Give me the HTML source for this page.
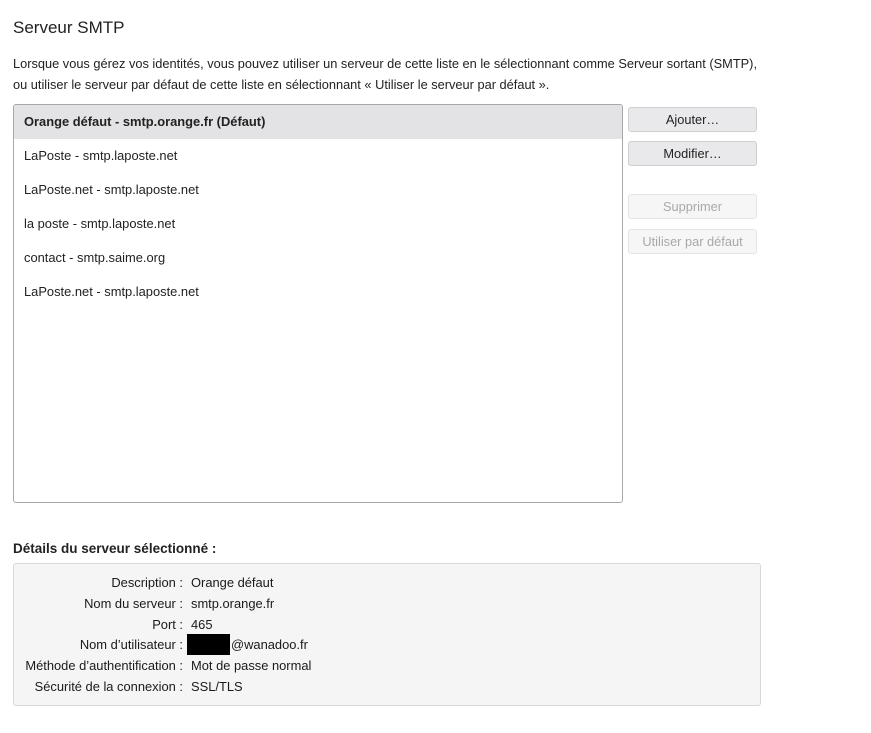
<!DOCTYPE html>
<html><head><meta charset="utf-8"><style>
body{margin:0;width:871px;height:733px;background:#fff;font-family:"Liberation Sans",sans-serif;color:#1a1a1a;position:relative;overflow:hidden}
.a{position:absolute;white-space:nowrap}
h1{position:absolute;left:13px;top:18px;margin:0;font-size:17px;font-weight:normal;color:#222}
.p{left:13px;font-size:12.8px;color:#222}
.list{position:absolute;left:13px;top:104px;width:608px;height:397px;border:1px solid #a8a8a8;border-radius:3px;overflow:hidden}
.row{height:34px;line-height:34px;padding-left:10px;font-size:12.9px;color:#222}
.sel{background:#e3e3e5;font-weight:bold}
.btn{position:absolute;left:628px;width:127px;height:23px;border:1px solid #cfcfd1;border-radius:3px;background:#e9e9eb;font-size:12.8px;text-align:center;line-height:23px;color:#222}
.dis{background:#f6f6f6;color:#a8a8a8;border-color:#e4e4e4}
.box{position:absolute;left:13px;top:563px;width:746px;height:141px;border:1px solid #d8d8d8;border-radius:3px;background:#f5f5f5}
.lab{left:0;width:183px;text-align:right;font-size:12.9px}
.val{left:191px;font-size:12.9px}
</style></head><body>
<h1>Serveur SMTP</h1>
<div class="a p" style="top:56px">Lorsque vous gérez vos identités, vous pouvez utiliser un serveur de cette liste en le sélectionnant comme Serveur sortant (SMTP),</div>
<div class="a p" style="top:77px">ou utiliser le serveur par défaut de cette liste en sélectionnant « Utiliser le serveur par défaut ».</div>
<div class="list">
<div class="row sel">Orange défaut - smtp.orange.fr (Défaut)</div>
<div class="row">LaPoste - smtp.laposte.net</div>
<div class="row">LaPoste.net - smtp.laposte.net</div>
<div class="row">la poste - smtp.laposte.net</div>
<div class="row">contact - smtp.saime.org</div>
<div class="row">LaPoste.net - smtp.laposte.net</div>
</div>
<div class="btn" style="top:107px">Ajouter…</div>
<div class="btn" style="top:141px">Modifier…</div>
<div class="btn dis" style="top:194px">Supprimer</div>
<div class="btn dis" style="top:229px">Utiliser par défaut</div>
<div class="a" style="left:13px;top:541px;font-size:13.5px;font-weight:bold;color:#222">Détails du serveur sélectionné :</div>
<div class="box"></div>
<div class="a lab" style="top:575px">Description :</div><div class="a val" style="top:575px">Orange défaut</div>
<div class="a lab" style="top:596px">Nom du serveur :</div><div class="a val" style="top:596px">smtp.orange.fr</div>
<div class="a lab" style="top:617px">Port :</div><div class="a val" style="top:617px">465</div>
<div class="a lab" style="top:637px">Nom d’utilisateur :</div>
<div class="a" style="left:187px;top:634px;width:43px;height:21px;background:#000"></div>
<div class="a val" style="top:637px;left:231px">@wanadoo.fr</div>
<div class="a lab" style="top:658px">Méthode d’authentification :</div><div class="a val" style="top:658px">Mot de passe normal</div>
<div class="a lab" style="top:679px">Sécurité de la connexion :</div><div class="a val" style="top:679px">SSL/TLS</div>
</body></html>
